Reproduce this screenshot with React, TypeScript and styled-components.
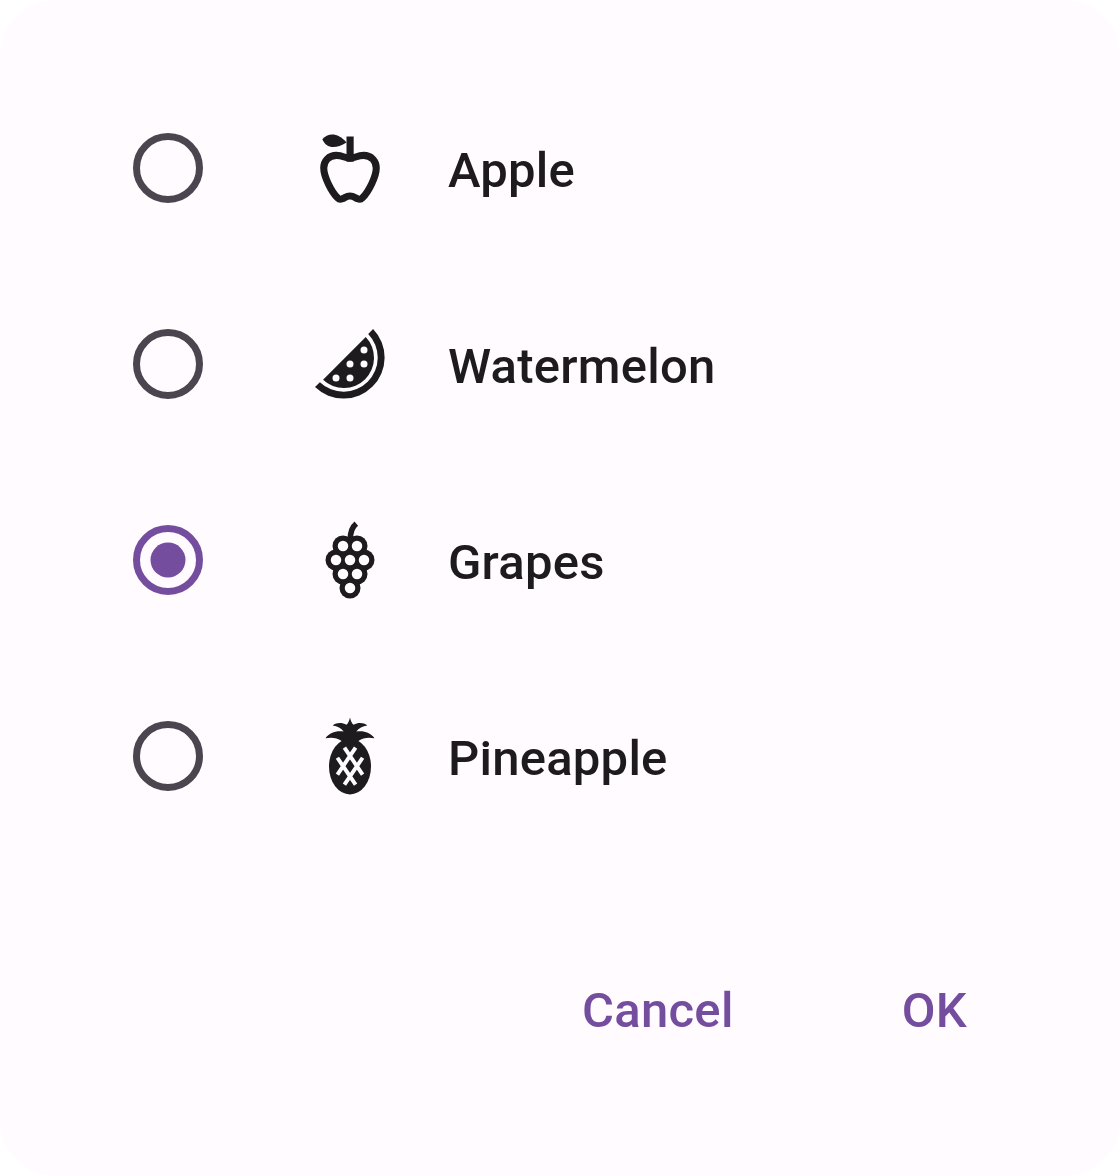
import React, { useState } from 'react';
import styled, { createGlobalStyle } from 'styled-components';

const GlobalStyle = createGlobalStyle`
  *, *::before, *::after { box-sizing: border-box; }
  body {
    margin: 0;
    background: #ffffff;
    font-family: Roboto, "Liberation Sans", sans-serif;
  }
`;

const Dialog = styled.section`
  display: flex;
  flex-direction: column;
  justify-content: space-between;
  width: 1120px;
  height: 1176px;
  padding: 70px 111px 95px 126px;
  border-radius: 56px;
  background: #fffbff;
`;

const Options = styled.div`
  display: flex;
  flex-direction: column;
`;

const Option = styled.label`
  display: flex;
  align-items: center;
  height: 196px;
  cursor: pointer;
`;

const HiddenInput = styled.input`
  appearance: none;
  width: 0;
  height: 0;
  margin: 0;
`;

const Radio = styled.svg<{ $checked: boolean }>`
  flex: none;
  width: 84px;
  height: 84px;
  margin-right: 98px;
  color: ${(p) => (p.$checked ? '#744d9f' : '#4a454e')};
`;

const Icon = styled.svg`
  flex: none;
  width: 84px;
  height: 84px;
  margin-right: 56px;
  color: #1d1b1e;
`;

const Label = styled.span`
  padding-top: 6px;
  color: #1d1b1e;
  font-size: 49px;
  font-weight: 500;
  line-height: 70px;
  letter-spacing: 0.23px;
`;

const Actions = styled.footer`
  display: flex;
  justify-content: flex-end;
  gap: 84px;
`;

const Action = styled.button`
  padding: 0 42px;
  border: 0;
  background: none;
  color: #744d9f;
  font: 500 49px/140px Roboto, "Liberation Sans", sans-serif;
  letter-spacing: 0.3px;
  cursor: pointer;
`;

const AppleIcon = () => (
  <Icon viewBox="0 0 24 24">
    <path
      d="M12 9.2C10.6 9.2 10 8.4 8.1 8.4C6 8.4 4.5 9.9 4.5 12C4.5 14.4 6.6 18.7 8.5 20.6C8.9 21 9.3 21 9.8 20.8C10.5 20.5 11 20 12 20C13 20 13.5 20.5 14.2 20.8C14.7 21 15.1 21 15.5 20.6C17.4 18.7 19.5 14.4 19.5 12C19.5 9.9 18 8.4 15.9 8.4C14 8.4 13.4 9.2 12 9.2Z"
      fill="none"
      stroke="currentColor"
      strokeWidth="2.02"
    />
    <path d="M11 3H13.05V10.2H11Z" fill="currentColor" />
    <path d="M4.1 3.8C5.7 1.85 8.6 1.85 11 4.7C7.7 6.8 5.1 6.3 4.1 3.8Z" fill="currentColor" />
  </Icon>
);

const WatermelonIcon = () => (
  <Icon viewBox="0 0 24 24" fill="currentColor">
    <path d="M16.5 4.3A8.63 8.63 0 0 1 4.3 16.5Z" />
    <path d="M18.6 2A11.74 11.74 0 0 1 2 18.6L3.4 17.2A9.76 9.76 0 0 0 17.2 3.4Z" />
    {[[16, 8], [12, 12], [16, 12], [8, 16], [12, 16]].map(([x, y]) => (
      <circle key={`${x}-${y}`} cx={x} cy={y} r="1" fill="#fffbff" />
    ))}
  </Icon>
);

const berries = [[10, 8], [14, 8], [8, 12], [12, 12], [16, 12], [10, 16], [14, 16], [12, 20]];

const GrapesIcon = () => (
  <Icon viewBox="0 0 24 24">
    <path d="M12.1 6C12.1 3.9 12.7 2.5 13.8 1.6" fill="none" stroke="currentColor" strokeWidth="1.6" />
    {berries.map(([x, y]) => (
      <circle key={`${x}-${y}`} cx={x} cy={y} r="3" fill="currentColor" />
    ))}
    {berries.map(([x, y]) => (
      <circle key={`${x}-${y}-hole`} cx={x} cy={y} r="1.5" fill="#fffbff" />
    ))}
  </Icon>
);

const PineappleIcon = () => (
  <Icon viewBox="0 0 24 24">
    <ellipse cx="12" cy="15" rx="6" ry="8" fill="currentColor" />
    <path
      d="M12 1C12.2 1.9 12.5 2.6 13 3.1C14.3 2.4 15.8 2.4 16.95 3.3C15.6 3.5 14.5 4.1 13.8 5C15.8 4.7 17.9 5.2 19 6.95C17.4 6.6 15.8 6.7 14.4 7.7L12 9L9.6 7.7C8.2 6.7 6.6 6.6 5 6.95C6.1 5.2 8.2 4.7 10.2 5C9.5 4.1 8.4 3.5 7.05 3.3C8.2 2.4 9.7 2.4 11 3.1C11.5 2.6 11.8 1.9 12 1Z"
      fill="currentColor"
    />
    <path
      d="M10.4 9.6L15.6 17.3M13.6 9.6L8.4 17.3M8.4 12.5L13.6 20.2M15.6 12.5L10.4 20.2"
      stroke="#fffbff"
      strokeWidth="1.12"
    />
  </Icon>
);

const fruits = [
  { name: 'Apple', Glyph: AppleIcon },
  { name: 'Watermelon', Glyph: WatermelonIcon },
  { name: 'Grapes', Glyph: GrapesIcon },
  { name: 'Pineapple', Glyph: PineappleIcon },
];

export default function App() {
  const [selected, setSelected] = useState('Grapes');
  return (
    <>
      <GlobalStyle />
      <Dialog role="dialog">
        <Options role="radiogroup">
          {fruits.map(({ name, Glyph }) => (
            <Option key={name}>
              <HiddenInput
                type="radio"
                name="fruit"
                checked={selected === name}
                onChange={() => setSelected(name)}
              />
              <Radio $checked={selected === name} viewBox="0 0 24 24">
                <circle cx="12" cy="12" r="9" fill="none" stroke="currentColor" strokeWidth="2" />
                {selected === name && <circle cx="12" cy="12" r="5" fill="currentColor" />}
              </Radio>
              <Glyph />
              <Label>{name}</Label>
            </Option>
          ))}
        </Options>
        <Actions>
          <Action type="button">Cancel</Action>
          <Action type="button">OK</Action>
        </Actions>
      </Dialog>
    </>
  );
}
